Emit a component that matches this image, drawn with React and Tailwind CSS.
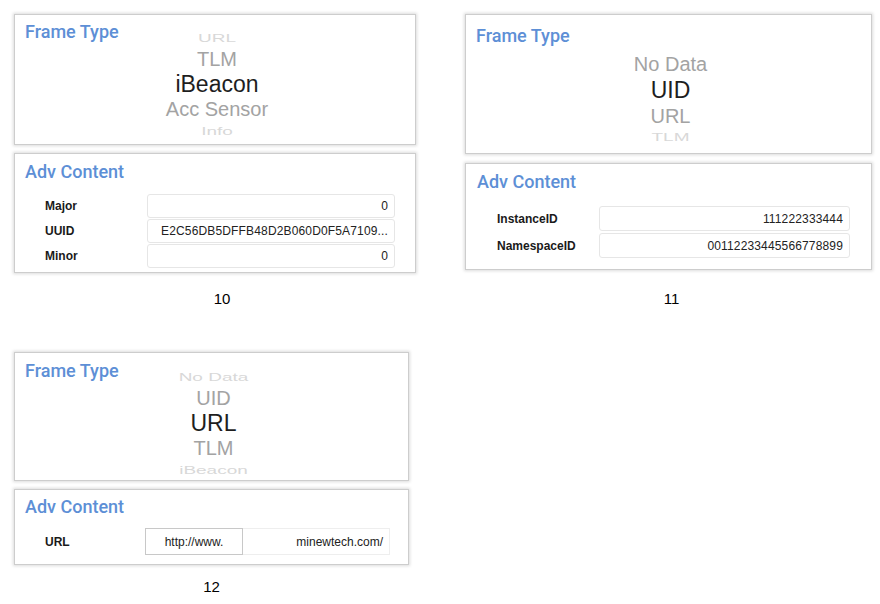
import React from 'react';

const card = 'bg-white border border-[#cdcdcd] shadow-[0_0_3px_1px_rgba(0,0,0,0.14)]';
const heading = 'text-[18px] leading-[24px] font-medium text-[#5d8fd6] font-[Roboto,_"Liberation_Sans",_sans-serif]';

// one wheel item: level 0 = selected, 1 = next to it, 2 = squashed edge
function WheelItem({ text, level, h }) {
	const tone =
		level === 0
			? 'text-[23px] text-[#1e1e1e]'
			: level === 1
			? 'text-[20px] text-[#a3a3a3]'
			: 'text-[19px] text-[#d8d8d8] scale-y-[0.55]';
	return (
		<div className="flex items-center justify-center" style={{ height: h }}>
			<span className={`leading-none whitespace-nowrap ${tone}`}>{text}</span>
		</div>
	);
}

function FrameTypeCard({ h, pt, pickerTop, items }) {
	return (
		<div className={`${card} grid grid-cols-1 grid-rows-1 overflow-hidden`} style={{ height: h }}>
			<div className={`col-start-1 row-start-1 self-start justify-self-start pl-[10px] ${heading}`} style={{ paddingTop: pt }}>
				Frame Type
			</div>
			<div className="col-start-1 row-start-1 self-start justify-self-center flex flex-col pl-[4px]" style={{ paddingTop: pickerTop }}>
				{items.map((it) => (
					<WheelItem key={it.text} {...it} />
				))}
			</div>
		</div>
	);
}

function FieldRow({ label, value, h }) {
	return (
		<div className="flex items-center" style={{ height: h }}>
			<div className="w-[102px] text-[12px] font-bold text-[#1a1a1a]">{label}</div>
			<div className="flex-1 h-full flex items-center justify-end px-[6px] border border-[#e6e6e6] rounded-[3px] text-[12px] tracking-[0.15px] text-[#222] whitespace-nowrap overflow-hidden">
				{value}
			</div>
		</div>
	);
}

function Caption({ children, className }) {
	return <div className={`text-center text-[15px] leading-[20px] text-black ${className}`}>{children}</div>;
}

export default function App() {
	return (
		<div className="w-[880px] h-[604px] bg-white overflow-hidden" style={{ fontFamily: '"Liberation Sans", Arial, sans-serif' }}>
			<div className="flex items-start pt-[14px] pl-[14px]">
				{/* 10 */}
				<div className="w-[402px] flex flex-col">
					<FrameTypeCard
						h={131}
						pt={5}
						pickerTop={14}
						items={[
							{ text: 'URL', level: 2, h: 18 },
							{ text: 'TLM', level: 1, h: 24 },
							{ text: 'iBeacon', level: 0, h: 26 },
							{ text: 'Acc Sensor', level: 1, h: 24 },
							{ text: 'Info', level: 2, h: 20 },
						]}
					/>
					<div className={`${card} mt-[8px] h-[120px] pt-[6px] pl-[10px] pr-[20px]`}>
						<div className={heading}>Adv Content</div>
						<div className="mt-[10px] pl-[20px] flex flex-col gap-[1px]">
							<FieldRow label="Major" value="0" h={24} />
							<FieldRow label="UUID" value="E2C56DB5DFFB48D2B060D0F5A7109..." h={24} />
							<FieldRow label="Minor" value="0" h={24} />
						</div>
					</div>
					<Caption className="mt-[16px] pl-[14px]">10</Caption>
				</div>

				{/* 11 */}
				<div className="w-[407px] ml-[49px] flex flex-col">
					<FrameTypeCard
						h={140}
						pt={9}
						pickerTop={37}
						items={[
							{ text: 'No Data', level: 1, h: 24 },
							{ text: 'UID', level: 0, h: 28 },
							{ text: 'URL', level: 1, h: 24 },
							{ text: 'TLM', level: 2, h: 18 },
						]}
					/>
					<div className={`${card} mt-[9px] h-[107px] pt-[6px] pl-[11px] pr-[21px]`}>
						<div className={heading}>Adv Content</div>
						<div className="mt-[12px] pl-[20px] flex flex-col gap-[2px]">
							<FieldRow label="InstanceID" value="111222333444" h={25} />
							<FieldRow label="NamespaceID" value="00112233445566778899" h={25} />
						</div>
					</div>
					<Caption className="mt-[19px] pl-[6px]">11</Caption>
				</div>
			</div>

			{/* 12 */}
			<div className="pl-[14px] mt-[43px]">
				<div className="w-[395px] flex flex-col">
					<FrameTypeCard
						h={129}
						pt={6}
						pickerTop={15}
						items={[
							{ text: 'No Data', level: 2, h: 18 },
							{ text: 'UID', level: 1, h: 24 },
							{ text: 'URL', level: 0, h: 26 },
							{ text: 'TLM', level: 1, h: 24 },
							{ text: 'iBeacon', level: 2, h: 20 },
						]}
					/>
					<div className={`${card} mt-[8px] h-[76px] pt-[5px] pl-[10px] pr-[18px]`}>
						<div className={heading}>Adv Content</div>
						<div className="mt-[9px] pl-[20px] flex items-center h-[27px]">
							<div className="w-[100px] text-[12px] font-bold text-[#1a1a1a]">URL</div>
							<div className="w-[98px] h-full flex items-center justify-center border border-[#c8c8c8] text-[12px] text-[#222]">
								http://www.
							</div>
							<div className="flex-1 h-full flex items-center justify-end pr-[6px] border border-l-0 border-[#eeeeee] text-[12px] text-[#222]">
								minewtech.com/
							</div>
						</div>
					</div>
					<Caption className="mt-[12px]">12</Caption>
				</div>
			</div>
		</div>
	);
}
